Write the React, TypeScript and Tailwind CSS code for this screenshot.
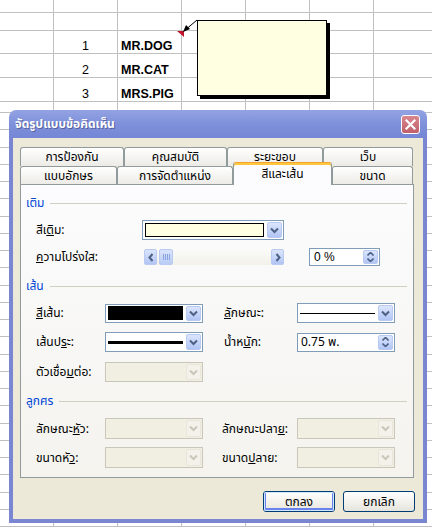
import React from "react";
import clsx from "clsx";

const thai = "font-['Tahoma','Noto_Sans_Thai','Noto_Sans',sans-serif]";

function DownChevron({ color = "#4d6185" }: { color?: string }) {
  return (
    <svg width="9" height="7" viewBox="0 0 9 7">
      <path d="M1 1.5 L4.5 5 L8 1.5" fill="none" stroke={color} strokeWidth="2" />
    </svg>
  );
}

function DropButton({ disabled }: { disabled?: boolean }) {
  return (
    <div
      className={clsx(
        "flex h-full w-[15px] shrink-0 items-center justify-center rounded-[2px] border",
        disabled
          ? "border-[#e8e6dc] bg-[#f3f2ea]"
          : "border-[#b9c9ef] bg-gradient-to-b from-[#dbe5fd] to-[#b1c5f5]"
      )}
    >
      <DownChevron color={disabled ? "#c9c7ba" : "#4d6185"} />
    </div>
  );
}

function SpinButton() {
  return (
    <div className="flex h-full w-[15px] shrink-0 flex-col items-center justify-center gap-[2px] rounded-[2px] border border-[#b9c9ef] bg-gradient-to-b from-[#dbe5fd] to-[#b1c5f5]">
      <svg width="7" height="4" viewBox="0 0 7 4">
        <path d="M0.5 3.5 L3.5 0.5 L6.5 3.5" fill="none" stroke="#4d6185" strokeWidth="1.6" />
      </svg>
      <svg width="7" height="4" viewBox="0 0 7 4">
        <path d="M0.5 0.5 L3.5 3.5 L6.5 0.5" fill="none" stroke="#4d6185" strokeWidth="1.6" />
      </svg>
    </div>
  );
}

function Field({
  className,
  disabled,
  spin,
  children,
}: {
  className: string;
  disabled?: boolean;
  spin?: boolean;
  children?: React.ReactNode;
}) {
  return (
    <div
      className={clsx(
        "flex shrink-0 items-stretch gap-[2px] border p-[1px]",
        disabled ? "border-[#c9c7ba] bg-[#f1efe2]" : "border-[#7f9db9] bg-white",
        className
      )}
    >
      <div className="flex min-w-0 flex-1 items-center px-[1px]">{children}</div>
      {spin ? <SpinButton /> : <DropButton disabled={disabled} />}
    </div>
  );
}

function Heading({ text }: { text: string }) {
  return (
    <div className="flex h-[14px] items-center gap-[6px] pr-[6px]">
      <span className="text-[12px] leading-none text-[#0046d5]">{text}</span>
      <div className="h-px flex-1 bg-[#d0d0bf]" />
    </div>
  );
}

function Label({ className, children }: { className: string; children: React.ReactNode }) {
  return <div className={clsx("shrink-0 text-[12px] leading-none text-black", className)}>{children}</div>;
}

function Tab({ className, label, selected }: { className: string; label: string; selected?: boolean }) {
  return (
    <div
      className={clsx(
        "flex shrink-0 items-center justify-center rounded-t-[3px] border border-b-0 text-[12px] leading-none",
        selected
          ? "relative z-10 -mt-[4px] h-[23px] border-[#919b9c] border-t-[#f5a231] bg-[#fcfcfe] shadow-[inset_0_2px_0_#ffc83c]"
          : "h-full border-[#919b9c] bg-gradient-to-b from-white to-[#ecebe6]",
        className
      )}
    >
      <span className={selected ? "pb-[1px]" : ""}>{label}</span>
    </div>
  );
}

function XpButton({ label, isDefault }: { label: string; isDefault?: boolean }) {
  return (
    <div className="h-[21px] w-[72px] rounded-[3px] border border-[#003c74] bg-gradient-to-b from-white to-[#e6e5dc]">
      <div
        className={clsx(
          "flex h-full w-full items-center justify-center rounded-[2px] text-[12px] leading-none",
          isDefault ? "shadow-[inset_0_0_0_1px_#cee7ff,inset_0_-1px_0_2px_#6982ee]" : ""
        )}
      >
        {label}
      </div>
    </div>
  );
}

const rowHeights = [13, 18, 23, 24, 24, 11, ...Array.from({ length: 24 }, () => 17.25)];
const colWidths = [54, 64, 64, 64, 64, 64, 64];

function Sheet() {
  const cells: Record<string, string> = {
    "2-1": "1",
    "2-2": "MR.DOG",
    "3-1": "2",
    "3-2": "MR.CAT",
    "4-1": "3",
    "4-2": "MRS.PIG",
  };
  return (
    <div
      className="grid font-['Liberation_Sans',Arial,sans-serif]"
      style={{
        gridTemplateColumns: colWidths.map((w) => `${w}px`).join(" "),
        gridTemplateRows: rowHeights.map((h) => `${h}px`).join(" "),
      }}
    >
      {rowHeights.map((_, r) =>
        colWidths.map((_, c) => {
          const t = cells[`${r}-${c}`];
          return (
            <div
              key={`${r}-${c}`}
              className={clsx(
                "flex items-end border-r border-b border-[#c0c0c0] pb-[1px] text-[12.5px] leading-none text-black",
                c === 1 ? "justify-center" : "pl-[3px]",
                c === 2 ? "font-bold" : ""
              )}
            >
              {t}
            </div>
          );
        })
      )}
    </div>
  );
}

export default function App() {
  return (
    <div className="relative h-[532px] w-[432px] overflow-hidden bg-white">
      <Sheet />

      {/* comment indicator + comment box */}
      <svg className="absolute left-0 top-0" width="432" height="110">
        <polygon points="177,31 184,31 184,37" fill="#c0142c" />
        <line x1="197" y1="20" x2="184" y2="31" stroke="#000" strokeWidth="1" />
        <polygon points="183,32 186,25 190,29" fill="#000" />
      </svg>
      <div className="absolute left-[197px] top-[20px] h-[76px] w-[130px] border border-black bg-[#ffffe1] shadow-[3px_3px_0_#000]" />

      {/* dialog */}
      <div className={clsx("absolute left-[9px] top-[110px] flex h-[413px] w-[418px] flex-col", thai)}>
        <div className="flex h-[28px] shrink-0 items-center justify-between rounded-t-[7px] bg-gradient-to-b from-[#93a2e3] via-[#7f91da] to-[#7486d5] pl-[6px] pr-[7px]">
          <span className="text-[12px] font-bold text-white [text-shadow:1px_1px_0_#56619e]">จัดรูปแบบข้อคิดเห็น</span>
          <div className="flex h-[19px] w-[19px] items-center justify-center rounded-[3px] border border-white bg-gradient-to-b from-[#d9868e] to-[#c0606a]">
            <svg width="11" height="11" viewBox="0 0 11 11">
              <path d="M1.5 1.5 L9.5 9.5 M9.5 1.5 L1.5 9.5" stroke="#fff" strokeWidth="2.2" strokeLinecap="square" />
            </svg>
          </div>
        </div>

        <div className="flex flex-1 flex-col border-x-4 border-b-4 border-[#7b86d3] bg-[#ece9d8] pl-[7px] pr-[9px] pt-[9px]">
          {/* tabs */}
          <div className="flex h-[37px] flex-col">
            <div className="flex h-[19px]">
              <Tab className="w-[104px]" label="การป้องกัน" />
              <Tab className="w-[103px]" label="คุณสมบัติ" />
              <Tab className="w-[96px]" label="ระยะขอบ" />
              <Tab className="w-[90px]" label="เว็บ" />
            </div>
            <div className="flex h-[18px]">
              <Tab className="w-[97px]" label="แบบอักษร" />
              <Tab className="w-[116px]" label="การจัดตำแหน่ง" />
              <Tab className="w-[99px]" label="สีและเส้น" selected />
              <Tab className="w-[81px]" label="ขนาด" />
            </div>
          </div>

          {/* panel */}
          <div className="flex h-[294px] w-[394px] flex-col border border-[#919b9c] bg-gradient-to-b from-[#fcfcfe] to-[#f4f3ee] pl-[5px] pt-[11px]">
            <Heading text="เติม" />
            <div className="mt-[10px] flex h-[20px] items-center">
              <Label className="ml-[10px] w-[106px]">
                สีเ<span className="underline">ติ</span>ม:
              </Label>
              <Field className="h-[20px] w-[142px]">
                <div className="h-[14px] w-full border border-black bg-[#ffffe1]" />
              </Field>
            </div>
            <div className="mt-[8px] flex h-[18px] items-center">
              <Label className="ml-[10px] w-[108px]">
                <span className="underline">ค</span>วามโปร่งใส:
              </Label>
              <div className="flex h-[16px] w-[140px] items-stretch bg-gradient-to-b from-[#fbfbf9] to-[#f2f1ea]">
                <div className="flex w-[13px] items-center justify-center rounded-[2px] border border-[#b9c9ef] bg-gradient-to-b from-[#dbe5fd] to-[#b1c5f5]">
                  <svg width="6" height="9" viewBox="0 0 6 9">
                    <path d="M4.5 1 L1.5 4.5 L4.5 8" fill="none" stroke="#4d6185" strokeWidth="2" />
                  </svg>
                </div>
                <div className="ml-[2px] flex w-[14px] items-center justify-center gap-[1px] rounded-[2px] border border-[#b9c9ef] bg-gradient-to-b from-[#dbe5fd] to-[#b9ccf6]">
                  <div className="h-[6px] w-px bg-[#8aa3e0]" />
                  <div className="h-[6px] w-px bg-[#8aa3e0]" />
                  <div className="h-[6px] w-px bg-[#8aa3e0]" />
                  <div className="h-[6px] w-px bg-[#8aa3e0]" />
                </div>
                <div className="flex-1" />
                <div className="flex w-[13px] items-center justify-center rounded-[2px] border border-[#b9c9ef] bg-gradient-to-b from-[#dbe5fd] to-[#b1c5f5]">
                  <svg width="6" height="9" viewBox="0 0 6 9">
                    <path d="M1.5 1 L4.5 4.5 L1.5 8" fill="none" stroke="#4d6185" strokeWidth="2" />
                  </svg>
                </div>
              </div>
              <Field className="ml-[25px] h-[18px] w-[71px]" spin>
                <span className="pl-[2px] font-['Liberation_Sans',Arial,sans-serif] text-[12px] leading-none">0 %</span>
              </Field>
            </div>

            <div className="mt-[13px]">
              <Heading text="เส้น" />
            </div>
            <div className="mt-[10px] flex h-[20px] items-center">
              <Label className="ml-[10px] w-[69px]">
                <span className="underline">สี</span>เส้น:
              </Label>
              <Field className="h-[19px] w-[98px]">
                <div className="h-[14px] w-full bg-black" />
              </Field>
              <Label className="ml-[21px] w-[73px]">
                <span className="underline">ลั</span>กษณะ:
              </Label>
              <Field className="h-[20px] w-[98px]">
                <div className="h-px w-full bg-black" />
              </Field>
            </div>
            <div className="mt-[9px] flex h-[20px] items-center">
              <Label className="ml-[10px] w-[69px]">
                เส้นป<span className="underline">ร</span>ะ:
              </Label>
              <Field className="h-[20px] w-[98px]">
                <div className="h-[3px] w-full bg-black" />
              </Field>
              <Label className="ml-[21px] w-[73px]">
                น้ำห<span className="underline">นั</span>ก:
              </Label>
              <Field className="h-[19px] w-[98px]" spin>
                <span className="pl-[1px] text-[12px] leading-none">0.75 พ.</span>
              </Field>
            </div>
            <div className="mt-[10px] flex h-[20px] items-center">
              <Label className="ml-[10px] w-[69px]">
                ตัวเชื่อ<span className="underline">ม</span>ต่อ:
              </Label>
              <Field className="h-[20px] w-[98px]" disabled />
            </div>

            <div className="mt-[12px]">
              <Heading text="ลูกศร" />
            </div>
            <div className="mt-[10px] flex h-[21px] items-center">
              <Label className="ml-[10px] w-[69px]">
                ลักษณะ<span className="underline">หั</span>ว:
              </Label>
              <Field className="h-[21px] w-[98px]" disabled />
              <Label className="ml-[19px] w-[75px]">
                ลักษณะปลา<span className="underline">ย</span>:
              </Label>
              <Field className="h-[21px] w-[98px]" disabled />
            </div>
            <div className="mt-[8px] flex h-[21px] items-center">
              <Label className="ml-[10px] w-[69px]">
                ขนาดหั<span className="underline">ว</span>:
              </Label>
              <Field className="h-[21px] w-[98px]" disabled />
              <Label className="ml-[19px] w-[75px]">
                ขนาด<span className="underline">ป</span>ลาย:
              </Label>
              <Field className="h-[21px] w-[98px]" disabled />
            </div>
          </div>

          {/* buttons */}
          <div className="-mr-[1px] mt-[13px] flex justify-end gap-[8px]">
            <XpButton label="ตกลง" isDefault />
            <XpButton label="ยกเลิก" />
          </div>
        </div>
      </div>
    </div>
  );
}
